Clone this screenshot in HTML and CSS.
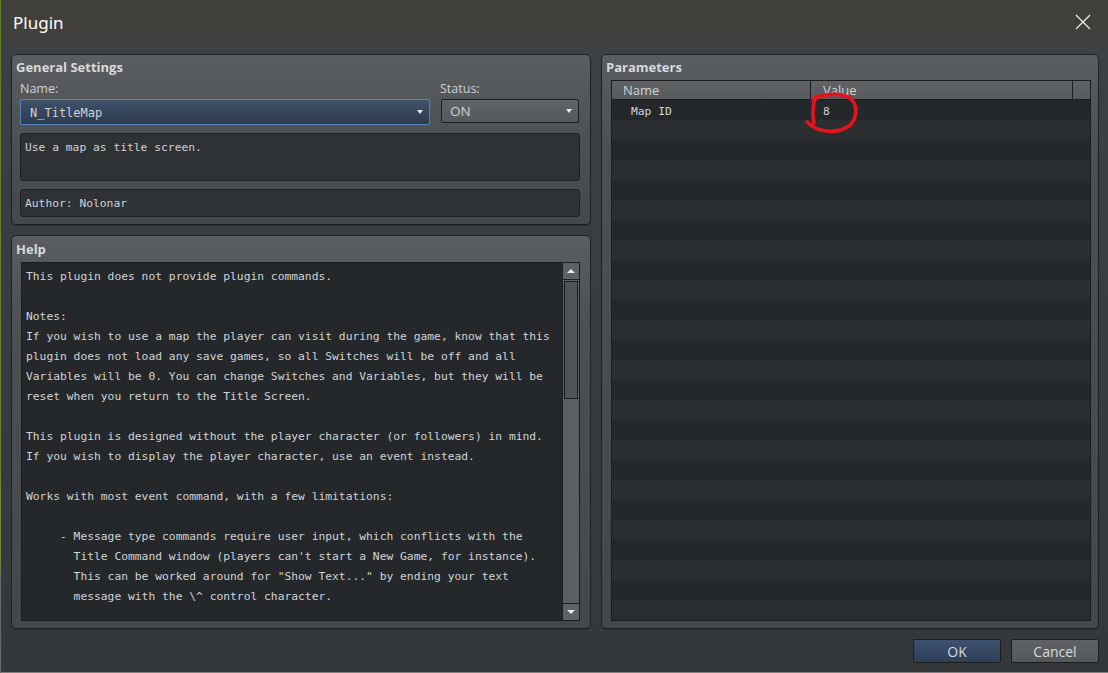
FILE: index.html
```html
<!DOCTYPE html>
<html>
<head>
<meta charset="utf-8">
<link rel="stylesheet" href="styles.css">
</head>
<body>
<div class="screen">
<div class="window">
  <div class="titlebar">
    <span class="title">Plugin</span>
    <svg class="close" width="16" height="16" viewBox="0 0 16 16"><path d="M1 1 L15 15 M15 1 L1 15" stroke="#f2f2f2" stroke-width="1.2" fill="none"/></svg>
  </div>
  <div class="content">
    <div class="leftcol">
      <div class="panel general">
        <div class="phead">General Settings</div>
        <div class="fields">
          <div class="fname">
            <div class="label">Name:</div>
            <div class="combo combo-focus"><span class="mono">N_TitleMap</span><span class="arrow"></span></div>
          </div>
          <div class="fstatus">
            <div class="label">Status:</div>
            <div class="combo combo-gray"><span>ON</span><span class="arrow"></span></div>
          </div>
        </div>
        <div class="box desc mono">Use a map as title screen.</div>
        <div class="box author mono">Author: Nolonar</div>
      </div>
      <div class="panel help">
        <div class="phead">Help</div>
        <div class="textarea">
          <div class="helptext mono">This plugin does not provide plugin commands.

Notes:
If you wish to use a map the player can visit during the game, know that this
plugin does not load any save games, so all Switches will be off and all
Variables will be 0. You can change Switches and Variables, but they will be
reset when you return to the Title Screen.

This plugin is designed without the player character (or followers) in mind.
If you wish to display the player character, use an event instead.

Works with most event command, with a few limitations:

     - Message type commands require user input, which conflicts with the
       Title Command window (players can't start a New Game, for instance).
       This can be worked around for "Show Text..." by ending your text
       message with the \^ control character.</div>
          <div class="scrollbar">
            <div class="sbtn"><span class="tri-up"></span></div>
            <div class="track"><div class="thumb"></div></div>
            <div class="sbtn sbtn-down"><span class="tri-down"></span></div>
          </div>
        </div>
      </div>
    </div>
    <div class="panel params">
      <div class="phead">Parameters</div>
      <div class="table">
        <div class="thead">
          <div class="th th-name">Name</div>
          <div class="th th-value">Value</div>
          <div class="th th-rest"></div>
        </div>
        <div class="tbody">
          <div class="row"><div class="td td-name mono">Map ID</div><div class="td td-value mono">8</div></div>
          <div class="row"></div><div class="row"></div><div class="row"></div><div class="row"></div>
          <div class="row"></div><div class="row"></div><div class="row"></div><div class="row"></div>
          <div class="row"></div><div class="row"></div><div class="row"></div><div class="row"></div>
          <div class="row"></div><div class="row"></div><div class="row"></div><div class="row"></div>
          <div class="row"></div><div class="row"></div><div class="row"></div><div class="row"></div>
          <div class="row"></div><div class="row"></div><div class="row"></div><div class="row"></div>
          <div class="row"></div>
        </div>
        <svg class="mark" width="70" height="50" viewBox="795 88 70 50"><path d="M813 100 C823 93 845 92 852 100 C859 108 856 123 846 128 C835 133 818 133 807 122 M816 96 C813 104 812 114 814 123" stroke="#e5141c" stroke-width="3.6" fill="none" stroke-linecap="round"/></svg>
      </div>
    </div>
  </div>
  <div class="footer">
    <div class="btn btn-ok">OK</div>
    <div class="btn btn-cancel">Cancel</div>
  </div>
</div>
</div>
</body>
</html>
```
FILE: styles.css
```css
* { box-sizing: border-box; }
body { margin: 0; background: #3a3d3f; }
.screen {
  width: 1108px; height: 673px;
  background: linear-gradient(to bottom, #5e7c2c 0, #6b8a33 560px, #6a6a6a 580px);
  font-family: "Open Sans", "Noto Sans", sans-serif;
}
.mono { font-family: "DejaVu Sans Mono", "Liberation Mono", monospace; font-size: 11.3px; }
.window {
  margin-left: 1px; width: 1107px; height: 673px;
  display: flex; flex-direction: column;
  background: linear-gradient(to bottom, #3e4143, #35383a);
  border-bottom: 1px solid #7e7f80;
}
.titlebar {
  height: 44px; flex: none;
  background: #42403d;
  display: flex; align-items: center; justify-content: space-between;
  padding: 0 17px 0 12px;
}
.title { color: #ffffff; font-size: 17px; font-family: "Noto Sans", "Open Sans", sans-serif; }
.close { display: block; }
.content {
  height: 585px; flex: none;
  display: flex; gap: 10px;
  padding: 10px 9px 0 10px;
}
.leftcol { width: 580px; display: flex; flex-direction: column; gap: 10px; }
.panel {
  border: 1px solid #1e2022;
  border-radius: 5px;
  background: linear-gradient(to bottom, #5a5e61 0, #4c5053 90px, #45484b 100%);
  box-shadow: 0 1px 0 #2a2c2e;
}
.phead {
  color: #d7d9db; font-weight: bold; font-size: 13px;
  line-height: 18px; height: 18px;
  margin: 3px 0 0 4px;
}
.general { height: 171px; padding: 0 10px 7px 8px; }
.general .phead { margin-left: -4px; }
.fields { display: flex; gap: 10px; margin-top: 5px; }
.fname { width: 410px; }
.fstatus { flex: 1; }
.label { color: #cfd2d4; font-size: 12.5px; line-height: 16px; height: 16px; margin-bottom: 2px; }
.combo {
  height: 26px; display: flex; align-items: center; justify-content: space-between;
  padding: 0 6px 0 9px; color: #cfd2d4; border-radius: 2px;
}
.combo-focus {
  background: linear-gradient(to bottom, #3f536c, #2c3a4d);
  border: 1px solid #5583b8;
}
.combo-focus .mono { padding-top: 1px; }
.combo-gray {
  margin-left: 1px; width: 138px; height: 24px; margin-top: 1px;
  background: linear-gradient(to bottom, #606467, #55595c);
  border: 1px solid #1c1e20;
  font-size: 13.5px; padding-left: 8px;
}
.combo .mono { font-size: 12px; }
.arrow {
  width: 0; height: 0;
  border-left: 3.5px solid transparent; border-right: 3.5px solid transparent;
  border-top: 4px solid #e6e8ea;
}
.box {
  background: #2f3235; border: 1px solid #1f2123; border-radius: 3px;
  color: #cfd3d6; padding: 0 4px;
  line-height: 20px;
}
.desc { height: 48px; margin-top: 8px; padding-top: 4px; }
.author { height: 28px; margin-top: 8px; padding-top: 4px; }
.help { flex: 1; display: flex; flex-direction: column; padding: 0 10px 7px 9px; }
.help .phead { margin-left: -5px; margin-top: 4px; }
.textarea {
  flex: 1; margin-top: 4px;
  background: #25282b; border: 1px solid #1a1c1e;
  display: flex; overflow: hidden;
}
.helptext {
  flex: 1; white-space: pre; overflow: hidden;
  color: #cfd3d6; line-height: 20px;
  padding: 4px 0 0 4px;
}
.scrollbar {
  width: 17px; flex: none; display: flex; flex-direction: column;
  border-left: 1px solid #1c1e20; background: #5b5f62;
}
.sbtn {
  height: 17px; flex: none; background: #5e6265;
  border-bottom: 1px solid #1c1e20;
  display: flex; align-items: center; justify-content: center;
}
.sbtn-down { border-bottom: none; border-top: 1px solid #1c1e20; }
.tri-up { width: 0; height: 0; border-left: 4px solid transparent; border-right: 4px solid transparent; border-bottom: 4px solid #e8eaec; }
.tri-down { width: 0; height: 0; border-left: 4px solid transparent; border-right: 4px solid transparent; border-top: 4px solid #e8eaec; }
.track { flex: 1; padding: 1px 1px 0 1px; }
.thumb { height: 118px; background: #505457; border: 1px solid #1c1e20; }
.params { flex: 1; display: flex; flex-direction: column; padding: 0 7px 7px 9px; }
.params .phead { margin-left: -5px; }
.table {
  flex: 1; margin-top: 4px; position: relative;
  border: 1px solid #1b1d1f; display: flex; flex-direction: column;
  background: #25282a;
}
.thead {
  height: 19px; flex: none; display: flex;
  background: linear-gradient(to bottom, #5f6366, #575b5e);
  border-bottom: 1px solid #1b1d1f;
}
.th { color: #d0d3d5; font-size: 13px; line-height: 18px; border-right: 1px solid #1b1d1f; }
.th-name { width: 199px; padding-left: 11px; }
.th-value { width: 262px; padding-left: 12px; }
.th-rest { flex: 1; border-right: none; }
.tbody { flex: 1; overflow: hidden; }
.row { height: 20px; display: flex; background: #25282a; }
.row:nth-child(even) { background: #2b2e31; }
.td { color: #cfd3d6; line-height: 20px; padding-top: 2px; }
.td-name { width: 199px; padding-left: 19px; }
.td-value { padding-left: 12px; }
.mark { position: absolute; left: 183px; top: 7px; }
.footer {
  flex: 1; display: flex; justify-content: flex-end; align-items: flex-start;
  gap: 10px; padding: 10px 9px 0 0;
}
.btn {
  width: 88px; height: 24px; border: 1px solid #1b1d1f; border-radius: 2px;
  display: flex; align-items: center; justify-content: center;
  font-size: 14px; color: #d6dadd;
}
.btn-ok { background: linear-gradient(to bottom, #3d5170, #2f3f57); }
.btn-cancel { background: linear-gradient(to bottom, #5f6366, #54585b); }
```
